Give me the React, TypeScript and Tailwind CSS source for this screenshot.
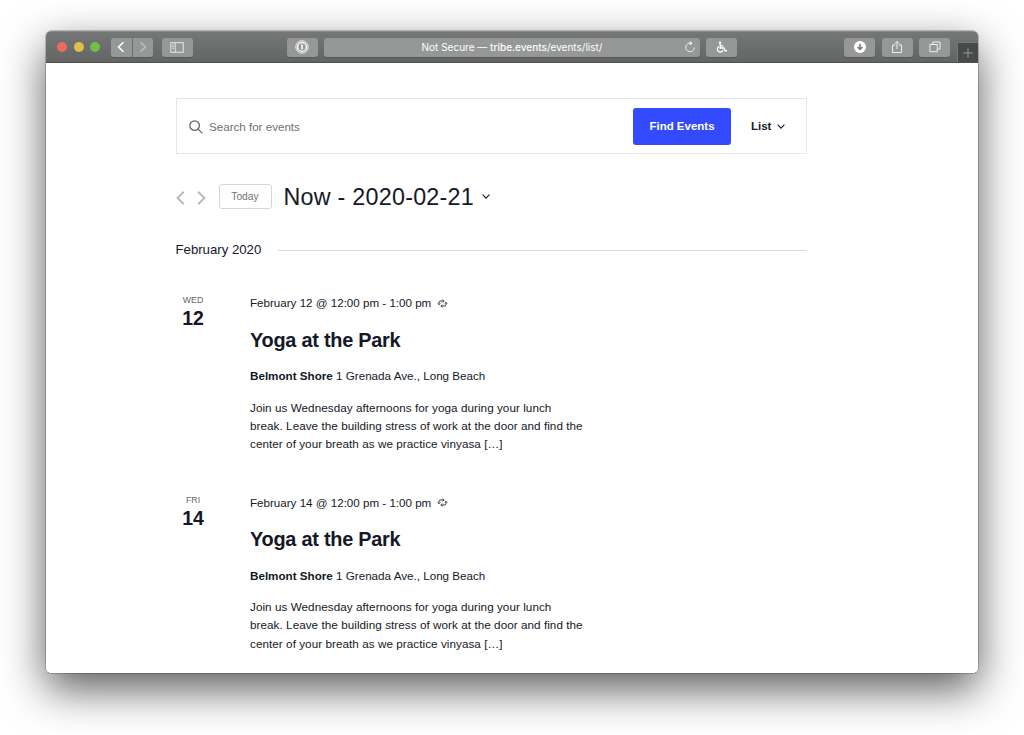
import type { ReactNode } from "react";
import clsx from "clsx";

const EVENTS = [
  { weekday: "WED", day: "12" },
  { weekday: "FRI", day: "14" },
];

function ToolbarButton({ className, children }: { className?: string; children?: ReactNode }) {
  return (
    <div
      className={clsx(
        "flex h-[19px] shrink-0 items-center justify-center rounded-[3px] bg-[#969896] text-white shadow-[0_1px_0_rgba(0,0,0,0.12)]",
        className
      )}
    >
      {children}
    </div>
  );
}

function Chevron({ className }: { className?: string }) {
  return (
    <svg viewBox="0 0 8 5" className={clsx("h-[5px] w-2", className)} fill="none" stroke="currentColor" strokeWidth="1.1">
      <polyline points="0.6,0.6 4,4.2 7.4,0.6" />
    </svg>
  );
}

function Toolbar() {
  return (
    <div className="flex h-8 shrink-0 border-t border-b border-t-[#8a8c8a] border-b-[#505250] bg-linear-to-b from-[#757776] to-[#636564] pl-[11px]">
      <div className="flex w-[920px] items-center">
        <div className="flex gap-[6.5px]">
          <span className="size-[10px] rounded-full bg-[#ed6a5e]" />
          <span className="size-[10px] rounded-full bg-[#e0c04c]" />
          <span className="size-[10px] rounded-full bg-[#72be47]" />
        </div>

        <ToolbarButton className="ml-[11px] w-[20.5px] rounded-r-none">
          <svg viewBox="0 0 8 12" className="h-3 w-2" fill="none" stroke="currentColor" strokeWidth="1.6">
            <polyline points="6.4,1.2 1.6,6 6.4,10.8" />
          </svg>
        </ToolbarButton>
        <ToolbarButton className="ml-px w-[20.5px] rounded-l-none">
          <svg viewBox="0 0 8 12" className="h-3 w-2 text-[#bfc1bf]" fill="none" stroke="currentColor" strokeWidth="1.3">
            <polyline points="1.6,1.2 6.4,6 1.6,10.8" />
          </svg>
        </ToolbarButton>

        <ToolbarButton className="ml-[8.5px] w-[31px]">
          <svg viewBox="0 0 14 11" className="h-[11px] w-3.5" fill="none" stroke="#e6e7e6" strokeWidth="1">
            <rect x="0.8" y="0.7" width="12.4" height="9.6" />
            <path d="M5.2 .7v9.6M2.2 2.9h1.6M2.2 4.6h1.6M2.2 6.3h1.6" />
          </svg>
        </ToolbarButton>

        <ToolbarButton className="ml-[94px] w-[31px]">
          <svg viewBox="0 0 14 14" className="size-3.5" fill="none" stroke="#fff">
            <circle cx="7" cy="7" r="6.2" strokeWidth="0.9" />
            <circle cx="7" cy="7" r="4.4" strokeWidth="1.4" />
            <path d="M7 4.4v5.2" strokeWidth="1.6" />
          </svg>
        </ToolbarButton>

        <ToolbarButton className="relative ml-[6.5px] w-[376px] bg-[#909290]">
          <span className="mt-px font-[Inter,sans-serif] text-[10px] whitespace-nowrap">
            Not Secure — <span className="font-medium">tribe.events</span>/events/list/
          </span>
          <svg viewBox="0 0 12 12" className="absolute right-1 size-3" fill="none" stroke="#f0f0f0" strokeWidth="1">
            <path d="M7.1 2.2A4.3 4.3 0 1 0 10.3 6.4" />
            <path d="M5.8 .1 8.7 2.3 5.8 4.4z" fill="#f0f0f0" stroke="none" />
          </svg>
        </ToolbarButton>

        <ToolbarButton className="ml-[6px] w-[31px]">
          <svg viewBox="0 0 12 12" className="size-3" fill="none" stroke="#fff" strokeWidth="1.3">
            <circle cx="4.1" cy="1.8" r="1.2" fill="#fff" stroke="none" />
            <path d="M4.2 2.8v4.2h3.6l1.5 3.1 1.7-.7M4.2 4.9h3.2" />
            <path d="M3 5.5A2.9 2.9 0 1 0 7 9.2" />
          </svg>
        </ToolbarButton>

        <ToolbarButton className="ml-[107px] w-[31px]">
          <svg viewBox="0 0 12 12" className="size-3">
            <circle cx="6" cy="6" r="6" fill="#fff" />
            <path d="M6 2.7v5.4M3.6 5.9 6 8.4l2.4-2.5" fill="none" stroke="#777977" strokeWidth="1.5" />
          </svg>
        </ToolbarButton>
        <ToolbarButton className="ml-[6.5px] w-[31px]">
          <svg viewBox="0 0 12 14" className="mb-px h-3.5 w-3" fill="none" stroke="#eee" strokeWidth="1">
            <path d="M4.2 5H1.5v7.5h9V5H7.8M6 9V1.5M3.7 3.7 6 1.4l2.3 2.3" />
          </svg>
        </ToolbarButton>
        <ToolbarButton className="ml-[6.5px] w-[31px]">
          <svg viewBox="0 0 12 12" className="size-3" fill="none" stroke="#eee" strokeWidth="1">
            <rect x="1" y="3.5" width="7.2" height="7.2" />
            <path d="M3.8 3.5V1h7.2v7.2H8.2" />
          </svg>
        </ToolbarButton>

        <div className="ml-[7px] flex h-5 w-[21px] shrink-0 items-center justify-center self-end border-t border-l border-[#777977] bg-[#484a49]">
          <svg viewBox="0 0 10 10" className="size-2.5" stroke="#999b99" strokeWidth="1">
            <path d="M5 .3v9.4M.3 5h9.4" />
          </svg>
        </div>
      </div>
    </div>
  );
}

function SearchBar() {
  return (
    <div className="flex h-14 items-center border border-[#e6e6e6] pl-[12.5px]">
      <svg viewBox="0 0 14 14" className="mt-px size-3.5" fill="none" stroke="#666" strokeWidth="1.3">
        <circle cx="5.6" cy="5.6" r="4.8" />
        <path d="m9.1 9.1 4.3 4.3" />
      </svg>
      <span className="mt-0.5 ml-[6px] flex-1 text-[11.6px] text-[#707070]">Search for events</span>
      <button className="h-[37px] w-[98px] rounded-[3px] bg-[#334aff] pt-px text-[11.5px] font-bold text-white">Find Events</button>
      <div className="ml-5 flex w-[55px] items-center pt-px text-[11.5px] font-bold">
        List
        <Chevron className="ml-[6px]" />
      </div>
    </div>
  );
}

function DateNav() {
  return (
    <div className="mt-[25px] flex h-[36px] items-center">
      <svg viewBox="0 0 9 14" className="mt-[2px] h-3.5 w-[9px]" fill="none" stroke="#bababa" strokeWidth="2">
        <polyline points="7.8,0.8 1.6,7 7.8,13.2" />
      </svg>
      <svg viewBox="0 0 9 14" className="mt-[2px] ml-3 h-3.5 w-[9px]" fill="none" stroke="#bababa" strokeWidth="2">
        <polyline points="1.2,0.8 7.4,7 1.2,13.2" />
      </svg>
      <button className="mb-px ml-[13px] h-[25px] w-[53px] rounded-[3px] border border-[#d5d5d5] text-[10.3px] text-[#727272]">Today</button>
      <h1 className="ml-[12px] text-[23.3px] tracking-[0.25px] whitespace-nowrap">Now - 2020-02-21</h1>
      <Chevron className="mb-px ml-[8px]" />
    </div>
  );
}

function EventRow({ weekday, day }: { weekday: string; day: string }) {
  return (
    <article className="flex h-[199.5px]">
      <div className="w-[35px] text-center">
        <div className="h-3 text-[8.8px] leading-3 text-[#666]">{weekday}</div>
        <div className="mt-px text-[19.5px] leading-[22px] font-bold">{day}</div>
      </div>
      <div className="ml-[39.5px] w-[345px] text-[11.65px]">
        <div className="flex h-[18px] items-center">
          <span className="text-[11.6px] leading-[18px] whitespace-nowrap">February {day} @ 12:00 pm - 1:00 pm</span>
          <svg viewBox="0 0 11 9" className="ml-[5.5px] h-[9px] w-[11px]" fill="none" stroke="currentColor" strokeWidth="0.9">
            <path d="M2 5.6V3.6Q2 2 3.6 2H7M9 3.4v2Q9 7 7.4 7H4" />
            <path d="M5.7 .5 7.2 2 5.7 3.5M5.3 5.5 3.8 7l1.5 1.5M.6 4.3 2 5.7l1.4-1.4M7.6 4.7 9 3.3l1.4 1.4" strokeWidth="0.7" />
          </svg>
        </div>
        <h3 className="mt-[13.5px] h-7 text-[19.9px] leading-7 font-bold tracking-[-0.25px] whitespace-nowrap">Yoga at the Park</h3>
        <div className="mt-[13.5px] h-[18px] leading-[18px] whitespace-nowrap">
          <b>Belmont Shore</b> 1 Grenada Ave., Long Beach
        </div>
        <p className="mt-[13.5px] text-[11.7px] leading-[18.3px] tracking-[0.05px] whitespace-nowrap">
          Join us Wednesday afternoons for yoga during your lunch
          <br />
          break. Leave the building stress of work at the door and find the
          <br />
          center of your breath as we practice vinyasa […]
        </p>
      </div>
    </article>
  );
}

export default function App() {
  return (
    <div className="h-[735px] w-[1024px] overflow-hidden bg-white pt-[31px] pl-[46px] font-['Liberation_Sans',Arial,sans-serif] text-[#141827]">
      <div className="h-[642px] w-[931.5px] rounded-[5px] shadow-[0_0_0_0.5px_rgba(0,0,0,0.4),0_16px_44px_rgba(0,0,0,0.65)]">
        <div className="flex h-full flex-col overflow-hidden rounded-[5px] bg-white">
          <Toolbar />
          <main className="ml-[129.5px] w-[631.5px] pt-[35px]">
            <SearchBar />
            <DateNav />
            <div className="mt-[26px] flex h-[18px] items-center">
              <h2 className="text-[13.2px] leading-[18px] whitespace-nowrap">February 2020</h2>
              <div className="ml-[17px] h-px flex-1 bg-[#dcdcdc]" />
            </div>
            <div className="mt-[35px]">
              {EVENTS.map((event) => (
                <EventRow key={event.day} {...event} />
              ))}
            </div>
          </main>
        </div>
      </div>
    </div>
  );
}
